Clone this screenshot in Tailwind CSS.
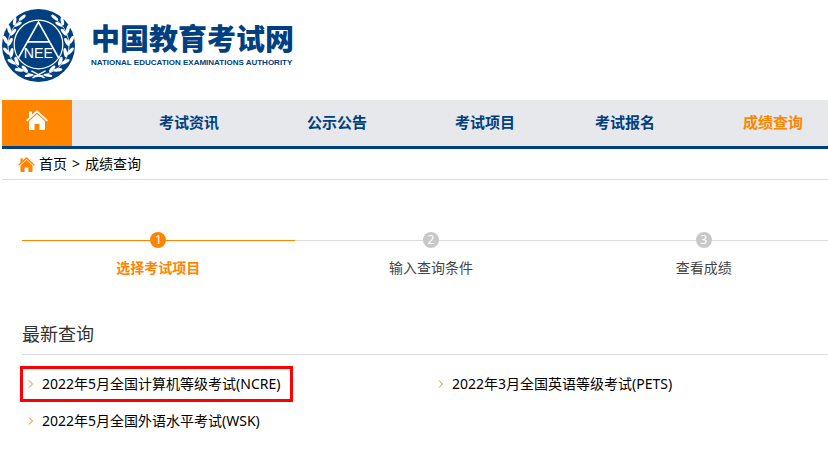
<!DOCTYPE html>
<html lang="zh-CN">
<head>
<meta charset="utf-8">
<title>中国教育考试网</title>
<script src="https://cdn.jsdelivr.net/npm/@tailwindcss/browser@4"></script>
</head>
<body class="bg-white font-['Noto_Sans','Noto_Sans_CJK_SC',sans-serif] text-sm text-black overflow-x-hidden">
<svg class="hidden">
  <symbol id="house" viewBox="0 0 22 20"><path d="M11 0 22 10.200 20.800 11.500 11 2.600 1.200 11.500 0 10.200 3 7.400V1.500H6V4.600Z"/><path d="M11 4 19 11.300V19Q19 20 18 20H13.500V14H8.500V20H4Q3 20 3 19V11.300Z"/></symbol>
  <symbol id="chevron" viewBox="0 0 6 8"><path d="M1 .5 4.500 4 1 7.500" fill="none" stroke="#f08000"/></symbol>
  <symbol id="branch" viewBox="0 0 72 72">
    <path d="M40 67C16 64 6 50 6 36C6 26 10 18 18 11" fill="none" stroke="#fff" stroke-width=".8"/>
    <g fill="#fff">
      <ellipse cx="20" cy="8.500" rx="4.200" ry="1.600" transform="rotate(-40 20 8.500)"/>
      <ellipse cx="12.500" cy="12" rx="4.200" ry="1.600" transform="rotate(-80 12.500 12)"/>
      <ellipse cx="16" cy="15" rx="3.800" ry="1.500" transform="rotate(-30 16 15)"/>
      <ellipse cx="7" cy="20" rx="4.500" ry="1.700" transform="rotate(75 7 20)"/>
      <ellipse cx="11" cy="23" rx="4.200" ry="1.600" transform="rotate(-50 11 23)"/>
      <ellipse cx="3.500" cy="30.500" rx="4.500" ry="1.700" transform="rotate(62 3.500 30.500)"/>
      <ellipse cx="8" cy="32.500" rx="4.500" ry="1.700" transform="rotate(-62 8 32.500)"/>
      <ellipse cx="4.500" cy="41.500" rx="4.500" ry="1.700" transform="rotate(48 4.500 41.500)"/>
      <ellipse cx="9.500" cy="43" rx="4.500" ry="1.700" transform="rotate(-80 9.500 43)"/>
      <ellipse cx="9.500" cy="52" rx="4.500" ry="1.700" transform="rotate(28 9.500 52)"/>
      <ellipse cx="14.500" cy="51.500" rx="4.500" ry="1.700" transform="rotate(70 14.500 51.500)"/>
      <ellipse cx="17" cy="60" rx="4.500" ry="1.700" transform="rotate(8 17 60)"/>
      <ellipse cx="22.500" cy="59" rx="4.200" ry="1.600" transform="rotate(48 22.500 59)"/>
      <ellipse cx="26.500" cy="65.500" rx="4.200" ry="1.400" transform="rotate(-10 26.500 65.500)"/>
    </g>
    <path d="M29 61 42 68" fill="none" stroke="#fff" stroke-width="1.300"/>
  </symbol>
</svg>

<div class="pl-[2px]">
  <header class="flex h-[100px] items-start pt-[9px]">
    <a href="#" class="flex gap-4 text-[#004080]" aria-label="中国教育考试网">
      <svg class="size-[73px]" viewBox="0 0 72 72">
        <circle cx="36" cy="36" r="36" fill="#004080"/>
        <use href="#branch"/>
        <use href="#branch" transform="translate(72 0) scale(-1 1)"/>
        <circle cx="36" cy="35" r="24" fill="#004080" stroke="#fff" stroke-width="1.200"/>
        <path d="M16 48.500 36 13 56 48.500M25.500 32.500H46.500" fill="none" stroke="#fff" stroke-width="1.700"/>
        <text x="21.500" y="48.500" font-family="Liberation Sans" font-size="14" fill="#fff">NEE</text>
      </svg>
      <div class="pt-3">
        <div class="text-[29px] leading-9 font-black">中国教育考试网</div>
        <div class="font-['Liberation_Sans',sans-serif] text-[8px] leading-3 font-bold">NATIONAL EDUCATION EXAMINATIONS AUTHORITY</div>
      </div>
    </a>
  </header>

  <nav class="flex h-[49px] border-b-3 border-[#004080] bg-[#e6e8ec] text-[15px] font-bold whitespace-nowrap text-[#004080]">
    <a href="#" aria-label="首页" class="flex w-[70px] shrink-0 justify-center bg-[#ff8400] pt-[10px]"><svg class="h-5 w-[22px] fill-white"><use href="#house"/></svg></a>
    <ul class="ml-[43px] flex items-center">
      <li><a href="#" class="px-11">考试资讯</a></li>
      <li><a href="#" class="px-11">公示公告</a></li>
      <li><a href="#" class="px-11">考试项目</a></li>
      <li class="-ml-2"><a href="#" class="px-11">考试报名</a></li>
      <li><a href="#" class="px-11 text-[#ff8400]">成绩查询</a></li>
    </ul>
  </nav>

  <div class="flex h-[31px] items-center border-b border-[#dcdcdc] pl-4">
    <svg class="mr-1 h-[15px] w-[17px] fill-[#ff8400]"><use href="#house"/></svg>
    <a href="#">首页</a><span class="px-[5px]">&gt;</span><a href="#">成绩查询</a>
  </div>

  <main class="-mr-3 pt-[52px] pl-5">
    <ol class="grid grid-cols-3 text-center text-[#444]">
      <li class="relative flex flex-col items-center gap-[10px] font-bold text-[#ff8400]">
        <div class="absolute inset-x-0 top-2 h-px bg-[#ff8400]"></div>
        <span class="relative size-4 rounded-full bg-[#ff8400] text-xs leading-4 font-normal text-white">1</span>
        <span class="leading-5">选择考试项目</span>
      </li>
      <li class="relative flex flex-col items-center gap-[10px]">
        <div class="absolute inset-x-0 top-2 h-px bg-[#dcdcdc]"></div>
        <span class="relative size-4 rounded-full bg-[#c8c8c8] text-xs leading-4 text-white">2</span>
        <span class="leading-5">输入查询条件</span>
      </li>
      <li class="relative flex flex-col items-center gap-[10px]">
        <div class="absolute inset-x-0 top-2 h-px bg-[#dcdcdc]"></div>
        <span class="relative size-4 rounded-full bg-[#c8c8c8] text-xs leading-4 text-white">3</span>
        <span class="leading-5">查看成绩</span>
      </li>
    </ol>

    <h2 class="mt-9 h-[41px] border-b border-[#dcdcdc] text-lg leading-10 text-[#333]">最新查询</h2>
    <ul class="-ml-[2px] grid grid-cols-2 gap-y-[1px] pt-[11px]">
      <li><a href="#" class="inline-flex h-9 items-center border-3 border-[#f00] pr-[10px] pl-[5px]"><svg class="mr-2 h-2 w-[6px]"><use href="#chevron"/></svg>2022年5月全国计算机等级考试(NCRE)</a></li>
      <li><a href="#" class="inline-flex h-9 items-center px-2"><svg class="mr-2 h-2 w-[6px]"><use href="#chevron"/></svg>2022年3月全国英语等级考试(PETS)</a></li>
      <li><a href="#" class="inline-flex h-9 items-center px-2"><svg class="mr-2 h-2 w-[6px]"><use href="#chevron"/></svg>2022年5月全国外语水平考试(WSK)</a></li>
    </ul>
  </main>
</div>
</body>
</html>
